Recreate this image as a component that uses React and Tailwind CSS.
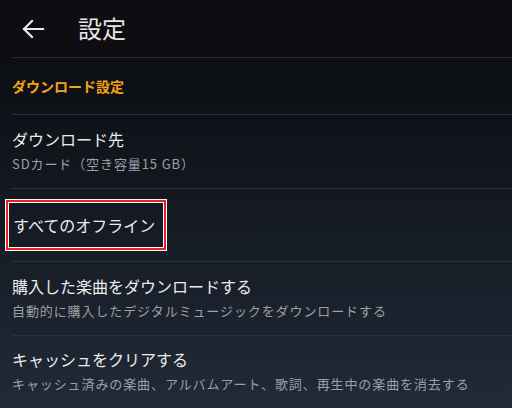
import React from 'react';

const items = [
  { title: 'ダウンロード先', sub: 'SDカード（空き容量15 GB）' },
  { title: 'すべてのオフライン', focused: true },
  { title: '購入した楽曲をダウンロードする', sub: '自動的に購入したデジタルミュージックをダウンロードする' },
  { title: 'キャッシュをクリアする', sub: 'キャッシュ済みの楽曲、アルバムアート、歌詞、再生中の楽曲を消去する' },
];

export default function App() {
  return (
    <div
      className="w-[512px] h-[408px] overflow-hidden flex flex-col bg-gradient-to-b from-[#080a0d] to-[#212a38]"
      style={{ fontFamily: '"Noto Sans CJK JP", "Noto Sans", sans-serif' }}
    >
      {/* HEADER */}
      <header className="h-[57px] shrink-0 bg-[#0f0d12] flex items-center">
        <svg width="24" height="22" viewBox="0 0 24 22" className="ml-[21px]" fill="none" stroke="#ebebeb" strokeWidth="2.2" strokeLinecap="square">
          <path d="M3 11h19M11 3l-8 8 8 8" />
        </svg>
        <h1 className="ml-[33px] text-[24px] leading-none text-[#e6e6e6] -mt-[2px]">設定</h1>
      </header>

      <div className="pl-3">
        <div className="h-[57px] border-t border-[#2b2e35] flex items-center">
          <span className="text-[14px] font-bold text-[#f5a416]">ダウンロード設定</span>
        </div>

        {items.map((item, i) => (
          <div key={i} className="border-t border-[#2c323d] h-[73.5px] flex flex-col justify-center">
            {item.focused ? (
              <div className="-ml-[7px] w-[162px] h-[52px] border border-white flex">
                <div className="flex-1 border-2 border-[#ee1c24] flex">
                  <div className="flex-1 border border-white flex items-center pl-[4px]">
                    <span className="text-[16px] text-[#ececec]">{item.title}</span>
                  </div>
                </div>
              </div>
            ) : (
              <div className="flex flex-col gap-[5px] -mt-[2px]">
                <span className="text-[16px] leading-[22px] text-[#ececec]">{item.title}</span>
                <span className="text-[13px] leading-[18px] text-[#9da0a6] tracking-[0.9px]">{item.sub}</span>
              </div>
            )}
          </div>
        ))}
      </div>
    </div>
  );
}
